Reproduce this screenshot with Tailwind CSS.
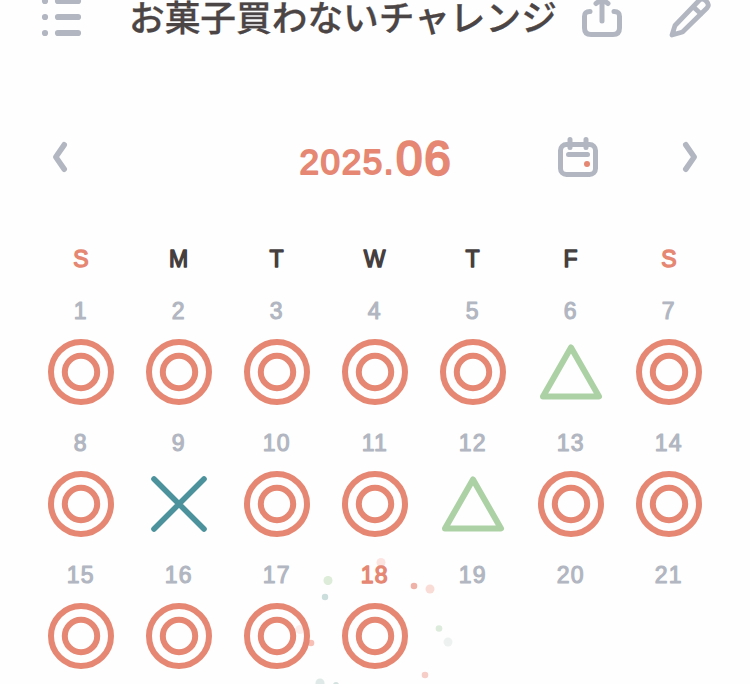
<!DOCTYPE html>
<html lang="ja">
<head>
<meta charset="utf-8">
<title>お菓子買わないチャレンジ</title>
<script src="https://cdn.jsdelivr.net/npm/@tailwindcss/browser@4"></script>
</head>
<body class="bg-[#fefefe]">
<svg class="hidden">
  <symbol id="double" viewBox="0 0 70 70"><g fill="none" stroke="#e58772" stroke-width="6"><circle cx="35" cy="35" r="30"/><circle cx="35" cy="35" r="16.2"/></g></symbol>
  <symbol id="triangle" viewBox="0 0 70 70"><path d="M35 10.5 L63 59.5 H7 Z" fill="none" stroke="#acd1a4" stroke-width="6" stroke-linejoin="round"/></symbol>
  <symbol id="cross" viewBox="0 0 70 70"><path d="M10 10 L60 60 M60 10 L10 60" fill="none" stroke="#4b929c" stroke-width="5.6" stroke-linecap="round"/></symbol>
</svg>
<main class="relative h-[684px] w-[750px] overflow-hidden font-['Liberation_Sans','Noto_Sans_CJK_JP',sans-serif]">
  <svg class="absolute inset-0" width="750" height="684" viewBox="0 0 750 684">
    <circle cx="381" cy="562.5" r="4.5" fill="#fce4e1"/>
    <circle cx="328" cy="580.5" r="4.5" fill="#dcecd8"/>
    <circle cx="325" cy="597" r="3.2" fill="#cbdedc"/>
    <circle cx="414" cy="586" r="3.3" fill="#efb2a9"/>
    <circle cx="430" cy="589" r="4.5" fill="#fadcd7"/>
    <circle cx="439" cy="628.5" r="3.3" fill="#dcebdc"/>
    <circle cx="448" cy="642" r="4.5" fill="#edf2f0"/>
    <circle cx="425" cy="675" r="3.3" fill="#f6cdc7"/>
    <circle cx="320" cy="683" r="4.5" fill="#dfe9e8"/>
    <circle cx="336" cy="685" r="3" fill="#d3e1df"/>
    <circle cx="300" cy="629.5" r="4.5" fill="#fcedea"/>
    <circle cx="311" cy="643" r="3.3" fill="#f6c0b7"/>
  </svg>
  <header class="relative flex h-[52px] items-start">
    <svg class="ml-10 h-[50px] w-[46px]" viewBox="40 0 46 50"><g fill="none" stroke="#b1b6c1" stroke-width="6.2" stroke-linecap="round"><path d="M45 1h.01M58 1h20M45 17h.01M58 17h20M45 33h.01M58 33h20"/></g></svg>
    <h1 class="ml-[43px] w-[430px] whitespace-nowrap text-[35.7px] leading-[32px] font-medium text-[#4c4545] [-webkit-text-stroke:0.3px_#4c4545] font-['Noto_Sans_CJK_JP',sans-serif]">お菓子買わないチャレンジ</h1>
    <svg class="ml-[19px] h-[50px] w-12" viewBox="578 0 48 50"><g fill="none" stroke="#b1b6c1" stroke-width="5" stroke-linecap="round" stroke-linejoin="round"><path d="M590 11.5c-4 0-5.5 1.5-5.5 5v11.5q0 6.5 6.5 6.5h22q6.5 0 6.5-6.5V16.5c0-3.5-1.5-5-5.5-5"/><path d="M602 21V1M596 3.5l6-4.5 6 4.5"/></g></svg>
    <svg class="ml-[40px] h-[50px] w-[48px]" viewBox="666 0 48 50"><g fill="none" stroke="#b1b6c1" stroke-width="4.8" stroke-linecap="round" stroke-linejoin="round"><path d="M672 35 L675 25.5 L699 0.5 Q702 -2.5 706 1 Q710 4.5 707 8 L682.5 32 Z M693.5 7l7.5 7"/></g></svg>
  </header>
  <nav class="relative mt-[78px] flex h-14 items-start">
    <svg class="ml-[50px] h-14 w-5" viewBox="50 130 20 56"><path d="M64.2 144.8L55.8 157l8.4 12.2" fill="none" stroke="#b1b6c1" stroke-width="5.6" stroke-linecap="round" stroke-linejoin="round"/></svg>
    <svg class="ml-[220px] h-14 w-[172px] font-['Liberation_Sans',sans-serif]" viewBox="290 130 172 56" fill="#e58772" stroke="#e58772" stroke-linejoin="round"><text x="299.5" y="174" font-size="35" letter-spacing="1.6" stroke-width="1.8">2025.</text><text x="396" y="174.5" font-size="47.5" letter-spacing="1.8" stroke-width="2.3">06</text></svg>
    <svg class="ml-[92px] h-14 w-12" viewBox="554 130 48 56"><g fill="none" stroke="#b1b6c1" stroke-width="5" stroke-linecap="round"><rect x="560.5" y="144.5" width="35" height="30" rx="6"/><path d="M570 139.5v8M586 139.5v8"/><path d="M568.5 154.5h19"/></g><circle cx="587" cy="164" r="3" fill="#e58772"/></svg>
    <svg class="ml-[78px] h-14 w-5" viewBox="680 130 20 56"><path d="M685.8 144.8l8.4 12.2-8.4 12.2" fill="none" stroke="#b1b6c1" stroke-width="5.6" stroke-linecap="round" stroke-linejoin="round"/></svg>
  </nav>
  <section class="relative mx-8 mt-[58px]">
    <div id="weekdays" class="grid h-[54px] grid-cols-7"></div>
    <div id="days" class="grid auto-rows-[132px] grid-cols-7"></div>
  </section>
</main>
<script>
// Labels are outlined with a round join to give soft letter corners.
const label = (text, color, stroke, spacing, x) =>
  `<svg class="h-[30px] w-[98px]" viewBox="0 0 98 30"><text x="${x}" y="23.2" text-anchor="middle" font-size="23" letter-spacing="${spacing}" fill="${color}" stroke="${color}" stroke-width="${stroke}" stroke-linejoin="round">${text}</text></svg>`;
document.getElementById('weekdays').innerHTML = [...'SMTWTFS'].map((d, i) => {
  const weekend = i === 0 || i === 6;
  return label(d, weekend ? '#e58772' : '#453e3e', 1.4, 0, weekend ? 49 : 48.6);
}).join('');
const marks = ['double','double','double','double','double','triangle','double','double','cross','double','double','triangle','double','double','double','double','double','double'];
const today = 18;
document.getElementById('days').innerHTML = Array.from({length: 21}, (_, i) => {
  const day = i + 1;
  const mark = marks[i] ? `<svg class="h-[70px] w-[70px]"><use href="#${marks[i]}"/></svg>` : '';
  return `<div class="flex flex-col items-center"><div class="-mt-[2px] mb-[11px] h-[30px]">${label(day, day === today ? '#e58772' : '#b1b6c1', day === today ? 1.4 : 1.1, 1.2, 48.8)}</div>${mark}</div>`;
}).join('');
</script>
</body>
</html>
